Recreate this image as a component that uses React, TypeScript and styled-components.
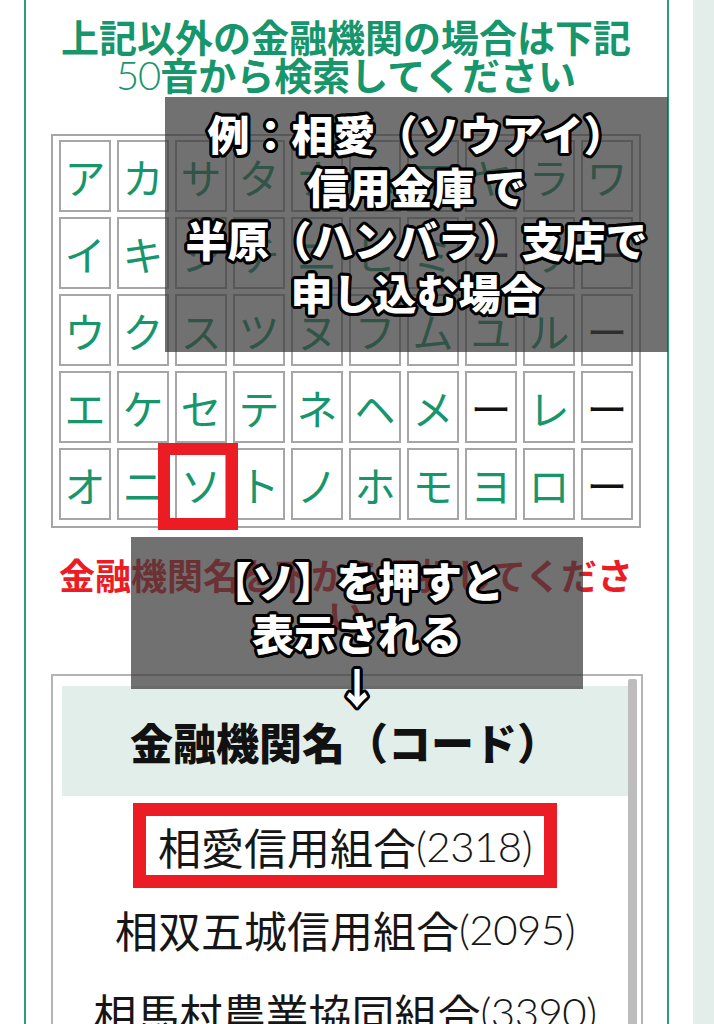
import styled, { createGlobalStyle } from "styled-components";

const GREEN = "#17966c";
const RED = "#ec1c24";

const kanaRows = [
  ["ア", "カ", "サ", "タ", "ナ", "ハ", "マ", "ヤ", "ラ", "ワ"],
  ["イ", "キ", "シ", "チ", "ニ", "ヒ", "ミ", "ー", "リ", "ー"],
  ["ウ", "ク", "ス", "ツ", "ヌ", "フ", "ム", "ユ", "ル", "ー"],
  ["エ", "ケ", "セ", "テ", "ネ", "ヘ", "メ", "ー", "レ", "ー"],
  ["オ", "ニ", "ソ", "ト", "ノ", "ホ", "モ", "ヨ", "ロ", "ー"],
];

const banks = [
  { name: "相愛信用組合", code: "2318", marked: true },
  { name: "相双五城信用組合", code: "2095", marked: false },
  { name: "相馬村農業協同組合", code: "3390", marked: false },
];

// black rim round the white caption text
const outline = Array.from({ length: 16 }, (_, i) => {
  const a = (i * Math.PI) / 8;
  return `${(Math.cos(a) * 3).toFixed(1)}px ${(Math.sin(a) * 3).toFixed(1)}px 0 #000`;
}).join(", ");

export default function App() {
  return (
    <>
      <GlobalStyle />
      <Page>
        <Main>
          <Card>
            <Title>
              上記以外の金融機関の場合は下記
              <br />
              <Thin>50</Thin>音から検索してください
            </Title>

            <KanaTable>
              {kanaRows.flat().map((k, i) => (
                <KanaCell key={i} $muted={k === "ー"}>
                  {k}
                </KanaCell>
              ))}
            </KanaTable>

            <RedNote>金融機関名を下から選択してください</RedNote>

            <ListBox>
              <ListBody>
                <ListHead>金融機関名（コード）</ListHead>
                {banks.map((b) => (
                  <BankRow key={b.code}>
                    <BankLabel $marked={b.marked}>
                      {b.name}
                      <Code>({b.code})</Code>
                    </BankLabel>
                  </BankRow>
                ))}
              </ListBody>
              <Scrollbar />
            </ListBox>

            <Caption $left={139} $top={97} $width={503} $height={255} $pad={9}>
              例：相愛（ソウアイ）
              <br />
              信用金庫 で
              <br />
              半原（ハンバラ）支店で
              <br />
              申し込む場合
            </Caption>

            <KeyMark />

            <Caption $left={105} $top={537} $width={452} $height={152} $pad={16}>
              【ソ】を押すと
              <br />
              表示される
              <br />↓
            </Caption>
          </Card>
        </Main>
        <SideStrip />
      </Page>
    </>
  );
}

const GlobalStyle = createGlobalStyle`
  html, body {
    margin: 0;
    padding: 0;
    background: #fff;
  }
  body {
    font-family: "Noto Sans CJK JP", "Noto Sans", sans-serif;
  }
`;

const Page = styled.div`
  display: flex;
  width: 714px;
  height: 1024px;
  overflow: hidden;
`;

const Main = styled.div`
  width: 693px;
  padding-left: 24px;
  box-sizing: border-box;
`;

const SideStrip = styled.div`
  flex: 1;
  background: #e3eeea;
`;

const Card = styled.div`
  position: relative;
  width: 645px;
  min-height: 1024px;
  box-sizing: border-box;
  border: 2px solid #2a9d7a;
  border-top: none;
  padding: 17px 26px 0 25px;
`;

const Title = styled.h1`
  margin: 0;
  text-align: center;
  color: ${GREEN};
  font-size: 38px;
  line-height: 38px;
  font-weight: 700;
`;

const Thin = styled.span`
  font-family: "Lato", "Noto Sans", sans-serif;
  font-weight: 300;
  font-size: 40px;
  letter-spacing: -1px;
`;

const KanaTable = styled.div`
  margin-top: 40px;
  width: 590px;
  box-sizing: border-box;
  display: grid;
  grid-template-columns: repeat(10, 52px);
  grid-template-rows: repeat(5, 72px);
  column-gap: 6px;
  row-gap: 5px;
  padding: 4px 6px 6px;
  border: 2px solid #a6a6a6;
`;

const KanaCell = styled.div<{ $muted: boolean }>`
  display: flex;
  align-items: center;
  justify-content: center;
  box-sizing: border-box;
  border: 2px solid #a6a6a6;
  font-size: 41px;
  color: ${(p) => (p.$muted ? "#111" : GREEN)};
`;

const RedNote = styled.p`
  margin: 26px 0 0;
  width: 590px;
  text-align: center;
  color: ${RED};
  font-size: 36px;
  line-height: 40px;
  font-weight: 700;
`;

const ListBox = styled.div`
  margin-top: 40px;
  width: 592px;
  height: 400px;
  box-sizing: border-box;
  display: flex;
  padding: 3px 4px 0 9px;
  border: 2px solid #b4b4b4;
  border-bottom: none;
`;

const ListBody = styled.div`
  flex: 1;
  padding-top: 7px;
`;

const Scrollbar = styled.div`
  width: 9px;
  background: #bdbdbd;
  border-radius: 2px;
`;

const ListHead = styled.div`
  height: 110px;
  margin-bottom: 8px;
  display: flex;
  align-items: center;
  justify-content: center;
  background: #e2eeea;
  color: #111;
  font-size: 43px;
  font-weight: 900;
`;

const BankRow = styled.div`
  height: 83px;
  display: flex;
  align-items: center;
  justify-content: center;
`;

const BankLabel = styled.span<{ $marked: boolean }>`
  display: inline-flex;
  align-items: center;
  box-sizing: border-box;
  height: 85px;
  padding: 0 12px;
  border: 13px solid ${(p) => (p.$marked ? RED : "transparent")};
  color: #161616;
  font-size: 43px;
  white-space: nowrap;
`;

const Code = styled.span`
  font-family: "Lato", "Noto Sans", sans-serif;
  font-weight: 300;
  font-size: 42px;
  letter-spacing: -0.5px;
`;

const Caption = styled.div<{
  $left: number;
  $top: number;
  $width: number;
  $height: number;
  $pad: number;
}>`
  position: absolute;
  left: ${(p) => p.$left}px;
  top: ${(p) => p.$top}px;
  width: ${(p) => p.$width}px;
  height: ${(p) => p.$height}px;
  box-sizing: border-box;
  padding-top: ${(p) => p.$pad}px;
  background: rgba(58, 58, 58, 0.72);
  color: #fff;
  text-align: center;
  font-size: 42px;
  line-height: 53px;
  font-weight: 900;
  text-shadow: ${outline};
  white-space: nowrap;
`;

const KeyMark = styled.div`
  position: absolute;
  left: 132px;
  top: 443px;
  width: 80px;
  height: 87px;
  box-sizing: border-box;
  border: 12px solid ${RED};
`;
